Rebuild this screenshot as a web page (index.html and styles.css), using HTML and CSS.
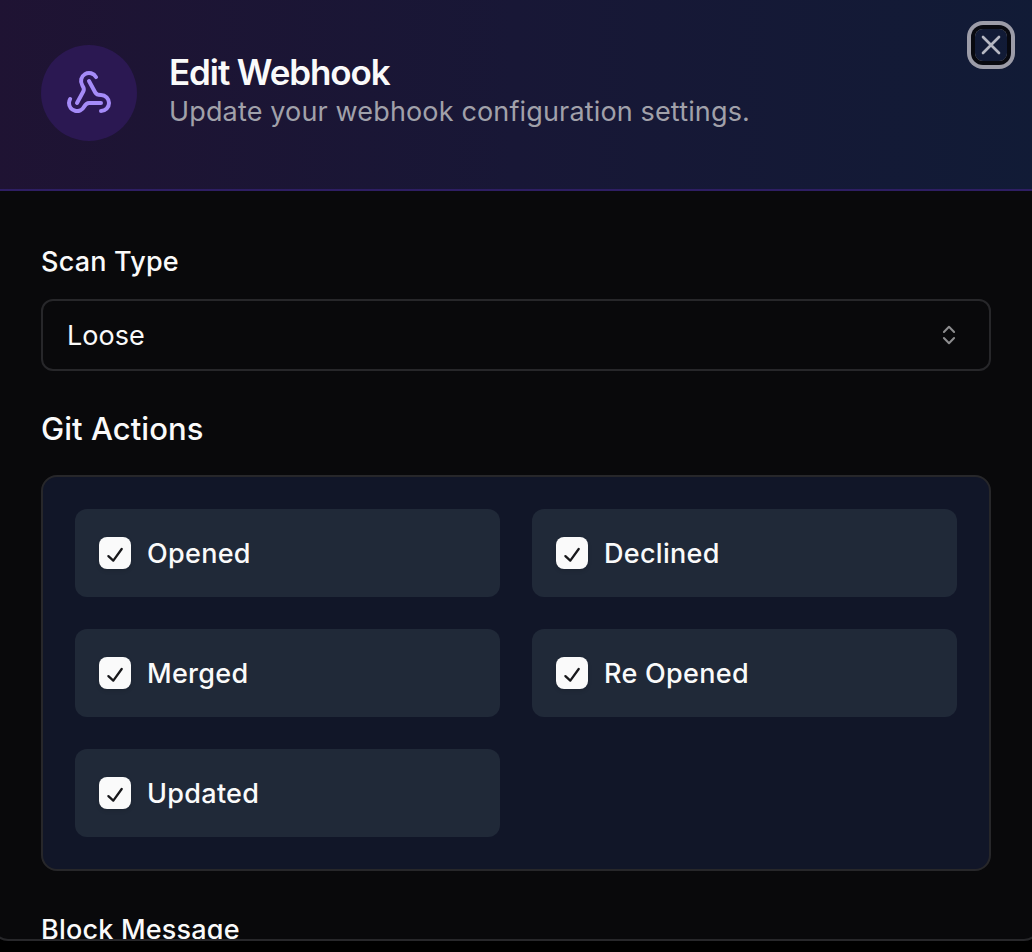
FILE: index.html
```html
<!DOCTYPE html>
<html lang="en">
<head>
<meta charset="utf-8">
<title>Edit Webhook</title>
<link rel="stylesheet" href="styles.css">
</head>
<body>
<svg class="sprite" aria-hidden="true">
  <symbol id="check" viewBox="0 0 32 32"><path d="M9.4 19.1 14.3 23.6 22.7 12"/></symbol>
</svg>
<main class="dialog">
  <header class="header">
    <div class="badge">
      <svg class="webhook" viewBox="0 0 24 24">
        <path d="M18 16.98h-5.99c-1.1 0-1.95.94-2.48 1.9A4 4 0 0 1 2 17c.01-.7.2-1.4.57-2"/>
        <path d="m6 17 3.13-5.78c.53-.97.1-2.18-.5-3.1a4 4 0 1 1 6.89-4.06"/>
        <path d="m12 6 3.13 5.73C15.66 12.7 16.9 13 18 13a4 4 0 0 1 0 8"/>
      </svg>
    </div>
    <div class="heading">
      <h1 class="title">Edit Webhook</h1>
      <p class="description">Update your webhook configuration settings.</p>
    </div>
    <button class="close" aria-label="Close"><svg class="cross" viewBox="0 0 24 24"><path d="M18 6 6 18M6 6l12 12"/></svg></button>
  </header>
  <section class="body">
    <div class="label scan-label">Scan Type</div>
    <div class="select">
      <span class="value">Loose</span>
      <svg class="caret" viewBox="0 0 32 32"><path d="M10.9 13 16 7.7 21.1 13M10.9 19 16 24.3 21.1 19"/></svg>
    </div>
    <h2 class="section-title">Git Actions</h2>
    <div class="actions">
      <label class="action"><span class="checkbox"><svg class="tick"><use href="#check"/></svg></span><span class="name">Opened</span></label>
      <label class="action"><span class="checkbox"><svg class="tick"><use href="#check"/></svg></span><span class="name">Declined</span></label>
      <label class="action"><span class="checkbox"><svg class="tick"><use href="#check"/></svg></span><span class="name">Merged</span></label>
      <label class="action"><span class="checkbox"><svg class="tick"><use href="#check"/></svg></span><span class="name">Re Opened</span></label>
      <label class="action"><span class="checkbox"><svg class="tick"><use href="#check"/></svg></span><span class="name">Updated</span></label>
    </div>
    <div class="label block-label">Block Message</div>
  </section>
</main>
</body>
</html>
```
FILE: styles.css
```css
* { box-sizing: border-box; }
body {
  margin: 0;
  height: 952px;
  overflow: hidden;
  background: #000;
  color: #fafafa;
  font-family: Inter, "Liberation Sans", sans-serif;
}
svg { display: block; fill: none; stroke-linecap: round; stroke-linejoin: round; }
.sprite { display: none; }
.dialog {
  position: relative;
  width: 1048px;
  height: 941px;
  margin-left: -8px;
  overflow: hidden;
  border: 2px solid #27272a;
  border-top: 0;
  border-radius: 0 0 16px 16px;
  background: #09090b;
}
.header {
  display: flex;
  align-items: flex-start;
  gap: 32px;
  height: 191px;
  padding: 45px 47px 0;
  border-bottom: 2px solid #2e1e63;
  background: linear-gradient(90deg, #1f1333, #181736 50%, #111b36);
}
.badge {
  display: grid;
  place-items: center;
  width: 96px;
  height: 96px;
  border-radius: 50%;
  background: #2b1852;
}
.webhook { width: 48px; height: 48px; stroke: #a58bf8; stroke-width: 2; }
.heading { padding: 9px 0 0; }
.title {
  margin: 0;
  font-size: 35px;
  line-height: 36px;
  font-weight: 600;
  letter-spacing: -1.1px;
}
.description {
  margin: 2px 0 0;
  color: #a1a1aa;
  font-size: 27px;
  line-height: 40px;
  letter-spacing: 0.15px;
}
.close {
  position: absolute;
  top: 29px;
  left: 981px;
  width: 32px;
  height: 32px;
  padding: 0;
  border: 0;
  border-radius: 8px;
  background: transparent;
  box-shadow: 0 0 0 4px #080910, 0 0 0 8px #9c9ca8;
}
.cross { width: 32px; height: 32px; stroke: #b5b7c2; stroke-width: 2; }
.body { padding: 51px 47px 0; }
.label {
  font-size: 27px;
  line-height: 40px;
  font-weight: 500;
  letter-spacing: 0.2px;
}
.select {
  display: flex;
  align-items: center;
  justify-content: space-between;
  height: 72px;
  margin-top: 17px;
  padding: 0 24px;
  border: 2px solid #27272a;
  border-radius: 12px;
  font-size: 27px;
  letter-spacing: 0;
}
.value { padding-top: 1px; }
.caret { width: 32px; height: 32px; stroke: #8d8d8f; stroke-width: 2; }
.section-title {
  margin: 34px 0 22px;
  font-size: 31px;
  line-height: 48px;
  font-weight: 500;
  letter-spacing: 0.05px;
}
.actions {
  display: grid;
  grid-template-columns: 1fr 1fr;
  gap: 32px;
  padding: 32px;
  border: 2px solid #27272a;
  border-radius: 16px;
  background: #111628;
}
.action {
  display: flex;
  align-items: center;
  gap: 16px;
  height: 88px;
  padding: 0 24px;
  border-radius: 12px;
  background: #202938;
  font-size: 27px;
  font-weight: 500;
  letter-spacing: 0.3px;
}
.name { padding-top: 1px; }
.checkbox {
  width: 32px;
  height: 32px;
  border-radius: 8px;
  background: #fafafa;
  box-shadow: 0 2px 4px rgba(0, 0, 0, 0.12);
}
.tick { width: 32px; height: 32px; stroke: #18181b; stroke-width: 2.3; }
.block-label { margin-top: 39px; }
```
